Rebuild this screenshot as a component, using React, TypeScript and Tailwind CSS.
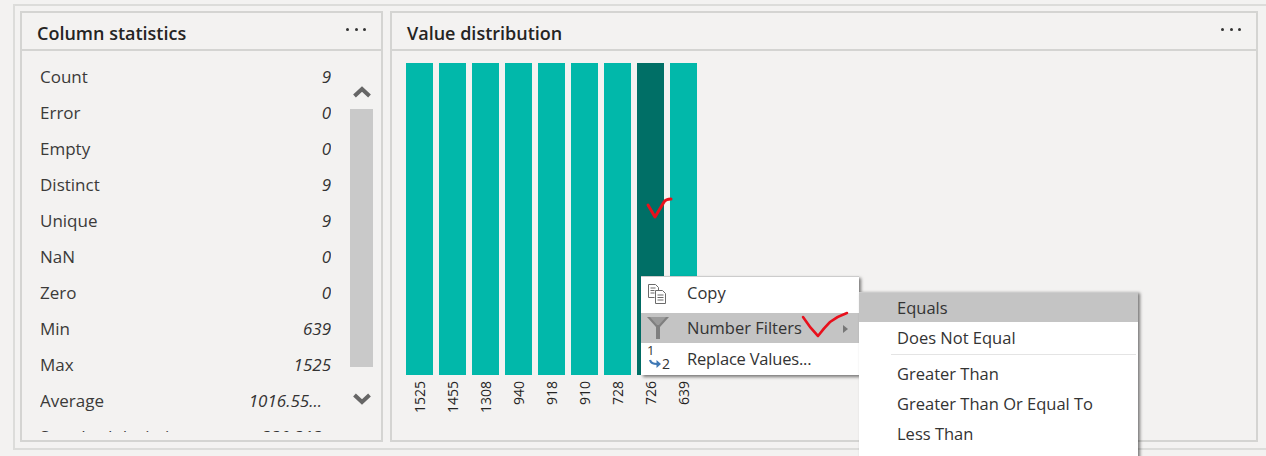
const stats = [
  { label: 'Count', value: '9' },
  { label: 'Error', value: '0' },
  { label: 'Empty', value: '0' },
  { label: 'Distinct', value: '9' },
  { label: 'Unique', value: '9' },
  { label: 'NaN', value: '0' },
  { label: 'Zero', value: '0' },
  { label: 'Min', value: '639' },
  { label: 'Max', value: '1525' },
  { label: 'Average', value: '1016.55...', inset: true },
  { label: 'Standard deviation', value: '330.313', inset: true },
]

const bars = ['1525', '1455', '1308', '940', '918', '910', '728', '726', '639']

const Dots = () => (
  <div className="flex gap-[5.500px] mt-[-4px]">
    <span className="w-[3px] h-[3px] rounded-full bg-[#333]" />
    <span className="w-[3px] h-[3px] rounded-full bg-[#333]" />
    <span className="w-[3px] h-[3px] rounded-full bg-[#333]" />
  </div>
)

const Header = ({ title }: { title: string }) => (
  <div className="h-[38px] shrink-0 border-b-2 border-[#d4d4d2] flex items-center justify-between pl-[15px] pr-[15px]">
    <span className="text-[18px] font-semibold text-[#252423] mt-[5px]">{title}</span>
    <Dots />
  </div>
)

const CopyIcon = () => (
  <svg width="22" height="22" viewBox="0 0 22 22" fill="none" stroke="#6b6b6b" strokeWidth="1">
    <path d="M1.500 1.500h7l3 3v3M1.500 1.500v13h6" fill="#fff" />
    <path d="M3.500 5h5M3.500 7.500h4M3.500 10h4" />
    <path d="M8.500 7.500h7l3 3v10h-10z" fill="#fff" />
    <path d="M10.500 12h6M10.500 14.500h6M10.500 17h6" />
  </svg>
)

const FunnelIcon = () => (
  <svg width="22" height="22" viewBox="0 0 22 22">
    <path d="M0 0h22L13 10v12H9V10z" fill="#7f7f7f" />
    <path d="M3 0h16l-7 8h-2z" fill="#9a9a9a" />
  </svg>
)

const ReplaceIcon = () => (
  <div className="relative w-[26px] h-[24px] text-[#333] leading-none">
    <span className="absolute left-[2px] top-[-3px] text-[13px]">1</span>
    <span className="absolute left-[17px] top-[10px] text-[14px]">2</span>
    <svg className="absolute left-[4px] top-[12px]" width="13" height="10" viewBox="0 0 13 10" fill="none">
      <path d="M1 1c1 3 3 4 7 4" stroke="#3f78b5" strokeWidth="2.200" />
      <path d="M7.500 1l4.500 4-4.500 4z" fill="#3f78b5" />
    </svg>
  </div>
)

export default function App() {
  return (
    <div className="w-[1266px] h-[456px] bg-[#f3f2f1] overflow-hidden relative font-['Open_Sans','Noto_Sans',sans-serif] text-[#333]">
      <div className="pt-[4px] pl-[13px]">
        <div className="border-t-2 border-l-2 border-[#dcdcda] h-[446px] border-b-2 pt-[5px] pl-[5px] pr-[8px] flex gap-[7px]">
          {/* Column statistics */}
          <section className="w-[363px] h-[431px] border-2 border-[#d4d4d2] flex flex-col">
            <Header title="Column statistics" />
            <div className="flex-1 flex overflow-hidden pl-[18px] pr-[8px] pt-[8px] pb-[8px]">
              <div className="w-[291px] overflow-hidden text-[17px]">
                {stats.map((s) => (
                  <div key={s.label} className="h-[36px] flex items-center justify-between">
                    <span className="text-[#3b3a39]">{s.label}</span>
                    <span className={s.inset ? 'italic pr-[9px]' : 'italic'}>{s.value}</span>
                  </div>
                ))}
              </div>
              <div className="ml-[19px] w-[23px] flex flex-col items-center">
                <div className="h-[50px] flex items-end pb-[11px]">
                  <svg width="18" height="13" viewBox="0 0 18 13" fill="none">
                    <path d="M1.500 11L9 4l7.500 7" stroke="#666" strokeWidth="4" />
                  </svg>
                </div>
                <div className="w-[23px] h-[258px] bg-[#c9c9c9]" />
                <div className="pt-[26px]">
                  <svg width="18" height="13" viewBox="0 0 18 13" fill="none">
                    <path d="M1.500 2L9 9l7.500-7" stroke="#666" strokeWidth="4" />
                  </svg>
                </div>
              </div>
            </div>
          </section>

          {/* Value distribution */}
          <section className="w-[868px] h-[431px] border-2 border-[#d4d4d2] flex flex-col">
            <Header title="Value distribution" />
            <div className="flex gap-[6px] pl-[14px] pt-[12px]">
              {bars.map((b, i) => (
                <div key={b} className="w-[27px] flex flex-col items-center">
                  <div className={i === 7 ? 'w-[27px] h-[312px] bg-[#006f66]' : 'w-[27px] h-[312px] bg-[#01b8aa]'} />
                  <span className="mt-[6px] text-[14px] leading-[16px] text-[#252423] [writing-mode:vertical-rl] rotate-180">{b}</span>
                </div>
              ))}
            </div>
          </section>
        </div>
      </div>

      {/* context menu */}
      <div className="absolute left-[641px] top-[276px] w-[218px] h-[99px] bg-white shadow-[2px_2px_3px_rgba(0,0,0,0.5)] border-t border-[#ccc] text-[16.500px] text-[#333]">
        <div className="h-[36px] flex items-center pb-[3px]">
          <span className="w-[46px] pl-[6px] flex"><CopyIcon /></span>
          <span>Copy</span>
        </div>
        <div className="h-[30px] bg-[#c4c4c4] flex items-center relative">
          <span className="w-[46px] pl-[6px] flex"><FunnelIcon /></span>
          <span>Number Filters</span>
          <span className="absolute left-[202px] top-[12px] border-l-[5px] border-y-[4px] border-y-transparent border-l-[#777]" />
        </div>
        <div className="h-[32px] flex items-center">
          <span className="w-[46px] pl-[4px] flex"><ReplaceIcon /></span>
          <span className="tracking-[-0.2px]">Replace Values...</span>
        </div>
      </div>

      {/* submenu */}
      <div className="absolute left-[859px] top-[292px] w-[279px] h-[180px] bg-white shadow-[2px_1px_3px_rgba(0,0,0,0.5)] border-t border-[#ccc] text-[16.500px] text-[#333]">
        <div className="h-[29px] bg-[#c4c4c4] flex items-center pl-[38px] pt-[1px]">Equals</div>
        <div className="h-[31px] flex items-center pl-[38px] pt-[1px]">Does Not Equal</div>
        <div className="ml-[32px] mr-[2px] mt-[1px] mb-[4px] border-t border-[#e4e4e4]" />
        <div className="h-[30px] flex items-center pl-[38px]">Greater Than</div>
        <div className="h-[30px] flex items-center pl-[38px]">Greater Than Or Equal To</div>
        <div className="h-[30px] flex items-center pl-[38px]">Less Than</div>
      </div>

      {/* hand drawn red ticks */}
      <svg className="absolute left-0 top-0 pointer-events-none" width="1266" height="456" fill="none" stroke="#e8101c" strokeLinecap="round" strokeLinejoin="round">
        <path d="M648 205L655 217L664 202Q666 199 671 199" strokeWidth="3" />
        <path d="M803 317Q810 328 818 336Q824 328 830 322Q838 316 847 313" strokeWidth="2.500" />
      </svg>
    </div>
  )
}
